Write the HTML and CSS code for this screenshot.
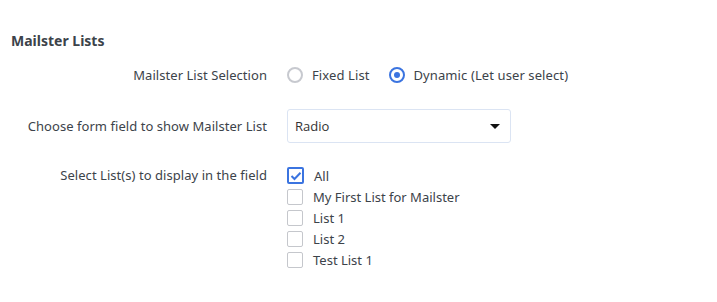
FILE: index.html
```html
<!DOCTYPE html>
<html>
<head>
<meta charset="utf-8">
<link rel="stylesheet" href="styles.css">
</head>
<body>
<div class="panel">
  <h2 class="title">Mailster Lists</h2>
  <div class="row row-radio">
    <div class="label">Mailster List Selection</div>
    <div class="field radios">
      <label class="radio"><span class="rcircle"></span>Fixed List</label>
      <label class="radio"><span class="rcircle on"></span>Dynamic (Let user select)</label>
    </div>
  </div>
  <div class="row row-select">
    <div class="label">Choose form field to show Mailster List</div>
    <div class="field">
      <div class="select"><span>Radio</span><span class="caret"></span></div>
    </div>
  </div>
  <div class="row row-checks">
    <div class="label">Select List(s) to display in the field</div>
    <div class="field checks">
      <label class="check"><span class="box on"><svg width="12" height="10" viewBox="0 0 12 10"><path d="M1.5 5 L4.5 8 L10.5 1.8" fill="none" stroke="#3b74e0" stroke-width="2"/></svg></span>All</label>
      <label class="check"><span class="box"></span>My First List for Mailster</label>
      <label class="check"><span class="box"></span>List 1</label>
      <label class="check"><span class="box"></span>List 2</label>
      <label class="check"><span class="box"></span>Test List 1</label>
    </div>
  </div>
</div>
</body>
</html>
```

FILE: styles.css
```css
html, body { margin: 0; padding: 0; background: #fff; }
body { font-family: "Noto Sans", "Open Sans", sans-serif; color: #3c434a; font-size: 13px; }
.panel { padding: 31px 11px 0 11px; }
.title { margin: 0; font-size: 14px; font-weight: bold; color: #3c434a; line-height: 20px; }
.row { display: flex; align-items: flex-start; }
.label { width: 256px; text-align: right; padding-right: 20px; color: #3c434a; line-height: 20px; letter-spacing: 0.05px; }
.row-radio { margin-top: 14px; }
.radios { display: flex; gap: 19px; line-height: 20px; }
.radio { display: flex; align-items: center; gap: 9px; letter-spacing: 0.1px; }
.rcircle { width: 12px; height: 12px; border: 2px solid #c7c9cf; border-radius: 50%; box-sizing: content-box; position: relative; }
.rcircle.on { border-color: #3b74e0; }
.rcircle.on::after { content: ""; position: absolute; left: 3px; top: 3px; width: 6px; height: 6px; border-radius: 50%; background: #3b74e0; }
.row-select { margin-top: 24px; }
.row-select .label { padding-top: 7px; }
.select { height: 32px; border: 1px solid #dbe4f3; border-radius: 3px; display: flex; align-items: center; justify-content: space-between; padding: 0 10px 0 7px; box-sizing: content-box; width: 205px; font-family: "Open Sans", sans-serif; color: #333; }
.caret { width: 0; height: 0; border-left: 5px solid transparent; border-right: 5px solid transparent; border-top: 5px solid #111; }
.row-checks { margin-top: 22px; }
.checks { display: flex; flex-direction: column; }
.check { display: flex; align-items: center; gap: 10px; height: 21px; }
.box { width: 14px; height: 14px; border: 1.5px solid #c5c7cc; border-radius: 2px; display: flex; align-items: center; justify-content: center; }
.box.on { border: 2px solid #3b74e0; width: 13px; height: 13px; }
```
